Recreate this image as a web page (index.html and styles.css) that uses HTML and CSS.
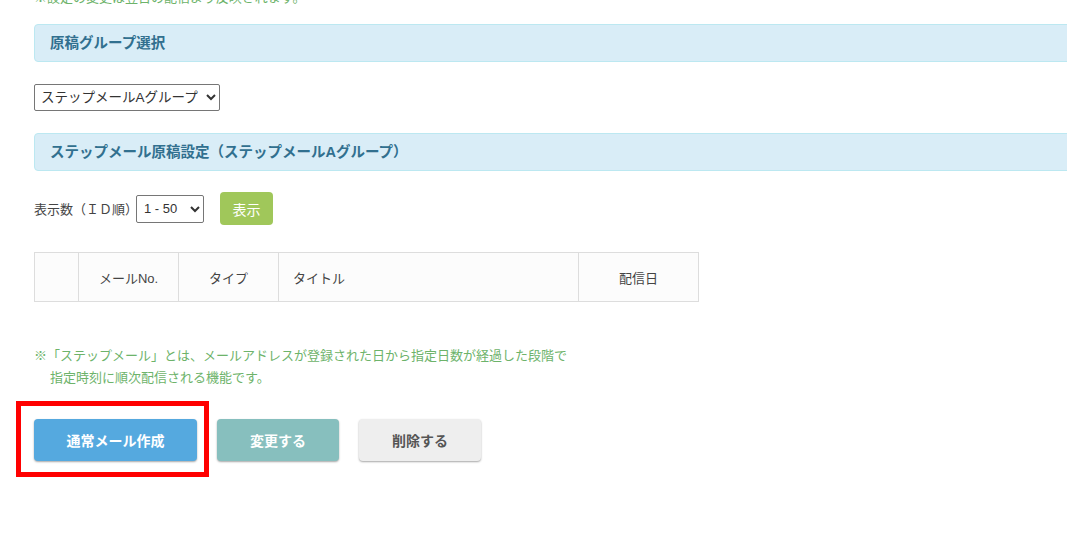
FILE: index.html
```html
<!DOCTYPE html>
<html lang="ja">
<head>
    <meta charset="UTF-8">
    <title>ステップメール原稿設定</title>
    <link rel="stylesheet" href="styles.css">
</head>
<body>
    <div class="page">
        <div class="content">
            <p class="note top-note">※設定の変更は翌日の配信より反映されます。</p>

            <div class="panel-heading">原稿グループ選択</div>
            <select class="group-select">
                <option>ステップメールAグループ</option>
                <option>ステップメールBグループ</option>
            </select>

            <div class="panel-heading">ステップメール原稿設定（ステップメールAグループ）</div>

            <div class="view-row">
                <span>表示数（ＩＤ順）</span>
                <select class="count-select">
                    <option>1 - 50</option>
                </select>
                <button class="btn btn-view">表示</button>
            </div>

            <table class="mail-table">
                <tr>
                    <th class="col-check"></th>
                    <th class="col-no">メールNo.</th>
                    <th class="col-type">タイプ</th>
                    <th class="col-title">タイトル</th>
                    <th class="col-date">配信日</th>
                </tr>
            </table>

            <p class="note step-note">
                ※「ステップメール」とは、メールアドレスが登録された日から指定日数が経過した段階で<br>
                <span class="indent">指定時刻に順次配信される機能です。</span>
            </p>

            <div class="actions">
                <div class="marked">
                    <button class="btn btn-create">通常メール作成</button>
                    <span class="mark-frame"></span>
                </div>
                <button class="btn btn-change">変更する</button>
                <button class="btn btn-delete">削除する</button>
            </div>
        </div>
    </div>
</body>
</html>
```

FILE: styles.css
```css
body {
    margin: 0;
    background: #fff;
    font-family: "Liberation Sans", "Noto Sans CJK JP", sans-serif;
    color: #333;
    font-size: 14px;
}

.page {
    width: 100%;
    overflow: hidden;
    padding-bottom: 60px;
}

.content {
    width: 1100px;
    padding-left: 34px;
}

.note {
    color: #6db36a;
    font-size: 13px;
    line-height: 22px;
    margin: 0;
}

.top-note {
    margin-top: -13px;
    margin-bottom: 15px;
}

.panel-heading {
    background: #d9edf7;
    border: 1px solid #bce8f1;
    border-radius: 4px;
    color: #31708f;
    font-weight: bold;
    font-size: 14.5px;
    height: 36px;
    line-height: 36px;
    padding-left: 15px;
}

.group-select {
    display: block;
    margin: 22px 0 22px;
    width: 186px;
    height: 27px;
    font-family: inherit;
    font-size: 13.5px;
    color: #333;
    border: 1px solid #767676;
    border-radius: 2px;
    background: #fff;
    padding: 0 2px;
}

.view-row {
    display: flex;
    align-items: center;
    margin-top: 21px;
    font-size: 13px;
    color: #444;
}

.count-select {
    width: 68px;
    height: 28px;
    margin-left: -2px;
    font-family: inherit;
    font-size: 13px;
    color: #333;
    border: 1px solid #767676;
    border-radius: 2px;
    background: #fff;
    padding: 0 3px;
}

.btn {
    border: none;
    border-radius: 4px;
    font-family: inherit;
    cursor: pointer;
}

.btn-view {
    margin-left: 16px;
    width: 53px;
    height: 33px;
    background: #a0c75a;
    color: #fff;
    font-size: 14px;
}

.mail-table {
    margin-top: 27px;
    border-collapse: collapse;
    background: #fcfcfc;
}

.mail-table th {
    border: 1px solid #ddd;
    height: 48px;
    font-weight: normal;
    font-size: 13px;
    color: #444;
    padding: 0;
}

.col-check { width: 43px; }
.col-no { width: 99px; }
.col-type { width: 99px; }
.col-title {
    width: 285px;
    text-align: left;
    padding-left: 14px !important;
}
.col-date { width: 119px; }

.step-note {
    margin-top: 43px;
}

.indent {
    padding-left: 16px;
}

.actions {
    display: flex;
    gap: 20px;
    margin-top: 30px;
}

.marked {
    position: relative;
}

.mark-frame {
    position: absolute;
    left: -18px;
    top: -18px;
    width: 183px;
    height: 66px;
    border: 5px solid #f00;
}

.actions .btn {
    height: 42px;
    font-size: 14px;
    font-weight: bold;
    box-shadow: 0 1px 2px rgba(0,0,0,0.35);
}

.btn-create {
    width: 163px;
    background: #55a9df;
    color: #fff;
}

.btn-change {
    width: 122px;
    background: #87bfbe;
    color: #fff;
}

.btn-delete {
    width: 122px;
    background: #eee;
    color: #555;
}
```
